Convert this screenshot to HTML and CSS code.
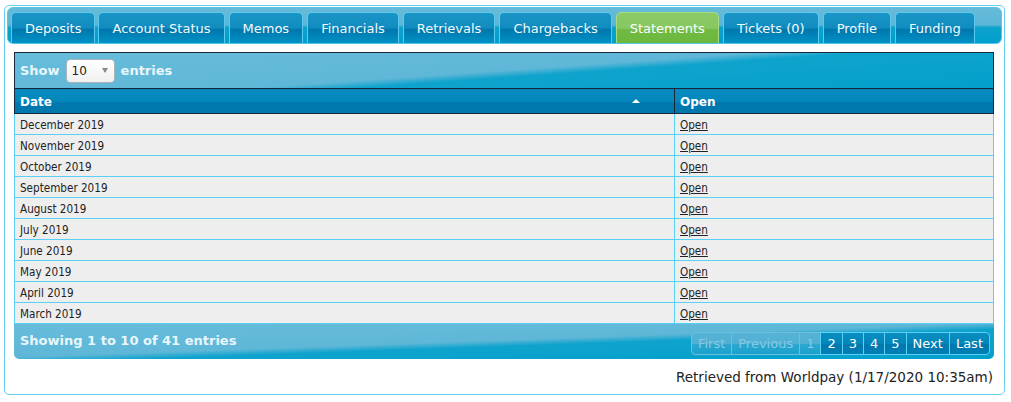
FILE: index.html
```html
<!DOCTYPE html>
<html>
<head>
<meta charset="utf-8">
<link rel="stylesheet" href="styles.css">
</head>
<body>
<div class="panel">
  <ul class="tabs">
    <li class="tab">Deposits</li>
    <li class="tab">Account Status</li>
    <li class="tab">Memos</li>
    <li class="tab">Financials</li>
    <li class="tab">Retrievals</li>
    <li class="tab">Chargebacks</li>
    <li class="tab active">Statements</li>
    <li class="tab">Tickets (0)</li>
    <li class="tab">Profile</li>
    <li class="tab">Funding</li>
  </ul>
  <div class="grid">
    <div class="toolbar">
      <span>Show</span>
      <span class="select"><span>10</span><span class="caret"></span></span>
      <span>entries</span>
    </div>
    <table class="data">
      <thead>
        <tr><th class="col-date">Date<span class="sort"></span></th><th class="col-open">Open</th></tr>
      </thead>
      <tbody>
        <tr><td>December 2019</td><td><a href="#">Open</a></td></tr>
        <tr><td>November 2019</td><td><a href="#">Open</a></td></tr>
        <tr><td>October 2019</td><td><a href="#">Open</a></td></tr>
        <tr><td>September 2019</td><td><a href="#">Open</a></td></tr>
        <tr><td>August 2019</td><td><a href="#">Open</a></td></tr>
        <tr><td>July 2019</td><td><a href="#">Open</a></td></tr>
        <tr><td>June 2019</td><td><a href="#">Open</a></td></tr>
        <tr><td>May 2019</td><td><a href="#">Open</a></td></tr>
        <tr><td>April 2019</td><td><a href="#">Open</a></td></tr>
        <tr><td>March 2019</td><td><a href="#">Open</a></td></tr>
      </tbody>
    </table>
    <div class="footer">
      <span class="info">Showing 1 to 10 of 41 entries</span>
      <div class="pager">
        <span class="pg off">First</span><span class="pg off">Previous</span><span class="pg off">1</span><span class="pg">2</span><span class="pg">3</span><span class="pg">4</span><span class="pg">5</span><span class="pg">Next</span><span class="pg">Last</span>
      </div>
    </div>
  </div>
  <p class="retrieved">Retrieved from Worldpay (1/17/2020 10:35am)</p>
</div>
</body>
</html>
```

FILE: styles.css
```css
html, body {
  margin: 0;
  padding: 0;
  background: #ffffff;
}
body {
  font-family: "DejaVu Sans", Verdana, sans-serif;
  color: #222;
}
.panel {
  margin: 5px 0 0 4px;
  width: 1001px;
  height: 390px;
  border: 1px solid #69cdf0;
  border-radius: 5px;
  box-sizing: border-box;
  padding: 1px 2px 0 2px;
}
.tabs {
  list-style: none;
  margin: 0;
  padding: 5px 0 0 3px;
  height: 37px;
  box-sizing: border-box;
  display: flex;
  align-items: flex-end;
  gap: 4px;
  border: 1px solid #57c4ea;
  border-radius: 6px;
  background: linear-gradient(to bottom, #66bad9 0%, #5cb6d7 48%, #0ca2cc 56%, #009fcb 100%);
}
.tab {
  height: 31px;
  box-sizing: border-box;
  padding: 0 13px;
  display: flex;
  align-items: center;
  font-size: 13px;
  color: #f2fafd;
  border: 1px solid #5ccaf0;
  border-bottom: none;
  border-radius: 5px 5px 0 0;
  background: linear-gradient(to bottom, #1b95c5 0%, #108cc0 50%, #0077ad 55%, #0086bb 80%, #0092c6 100%);
}
.tab:first-child { margin-right: -1px; }
.tab.active {
  background: linear-gradient(to bottom, #8ccb68 0%, #86c862 50%, #70ba42 56%, #6cb83c 100%);
  border-color: #a6dc86;
  color: #fff;
}
.grid {
  margin: 8px 8px 0 7px;
}
.toolbar {
  height: 36px;
  box-sizing: border-box;
  border: 1px solid #18283a;
  border-bottom: none;
  display: flex;
  align-items: center;
  padding: 0 6px 0 5px;
  gap: 6px;
  font-size: 13px;
  font-weight: bold;
  color: #e9f6fb;
  background: linear-gradient(176deg, #67bcdb 0%, #5fb7d7 50%, #0ea3cd 57%, #03a0cb 100%);
}
.select {
  width: 49px;
  height: 24px;
  box-sizing: border-box;
  border: 1px solid #a9b3b8;
  border-radius: 4px;
  background: linear-gradient(to bottom, #ffffff, #f0f0f0);
  display: flex;
  align-items: center;
  justify-content: space-between;
  padding: 0 6px 0 5px;
  font-weight: normal;
  color: #222;
  font-size: 12px;
}
.caret {
  width: 0;
  height: 0;
  border-left: 3px solid transparent;
  border-right: 3px solid transparent;
  border-top: 5px solid #888;
}
.data {
  width: 100%;
  border-collapse: collapse;
  font-size: 12px;
}
.data th {
  height: 25px;
  box-sizing: border-box;
  border: 1px solid #18283a;
  text-align: left;
  padding: 1px 6px 0 5px;
  font-weight: bold;
  color: #fff;
  background: linear-gradient(to bottom, #0a8cbf 0%, #0087bb 50%, #0077ad 56%, #0078ae 100%);
}
.col-date {
  width: 660px;
  position: relative;
}
.sort {
  position: absolute;
  right: 34px;
  top: 10px;
  width: 0;
  height: 0;
  border-left: 4px solid transparent;
  border-right: 4px solid transparent;
  border-bottom: 4px solid #fff;
}
.data td {
  height: 21px;
  box-sizing: border-box;
  padding: 1px 6px 0 5px;
  border: 1px solid #5ad0f5;
  background: #eeeeee;
  font-family: "DejaVu Sans Condensed", "DejaVu Sans", sans-serif;
  font-size: 11.6px;
  color: #222;
}
.data tbody tr:first-child td { border-top: none; }
.data a {
  color: #222;
  text-decoration: underline;
}
.footer {
  height: 35px;
  box-sizing: border-box;
  display: flex;
  align-items: center;
  justify-content: space-between;
  padding: 0 4px 0 6px;
  border-radius: 0 0 5px 5px;
  background: linear-gradient(178deg, #67bcdb 0%, #5fb7d7 48%, #0ea3cd 57%, #03a0cb 100%);
}
.info {
  font-size: 13px;
  font-weight: bold;
  color: #e9f6fb;
  margin-top: -2px;
}
.pager {
  display: flex;
  margin-top: 3px;
  border-radius: 4px;
  overflow: hidden;
}
.pg {
  height: 23px;
  box-sizing: border-box;
  display: flex;
  align-items: center;
  padding: 0 6px;
  font-size: 13px;
  color: #fff;
  border: 1px solid #5ccff5;
  margin-left: -1px;
  background: linear-gradient(to bottom, #0a8ec1 0%, #0086ba 50%, #0078ae 56%, #0080b5 100%);
}
.pg:first-child { margin-left: 0; border-radius: 4px 0 0 4px; }
.pg:last-child { border-radius: 0 4px 4px 0; }
.pg.off {
  color: #86cbe4;
  border-color: #6cc0df;
  background: linear-gradient(to bottom, #56b3d5 0%, #50b0d4 50%, #2aa6d0 56%, #1aa2cc 100%);
}
.retrieved {
  margin: 10px 0 0 0;
  padding-right: 9px;
  text-align: right;
  font-size: 13.5px;
  color: #222;
}
```
